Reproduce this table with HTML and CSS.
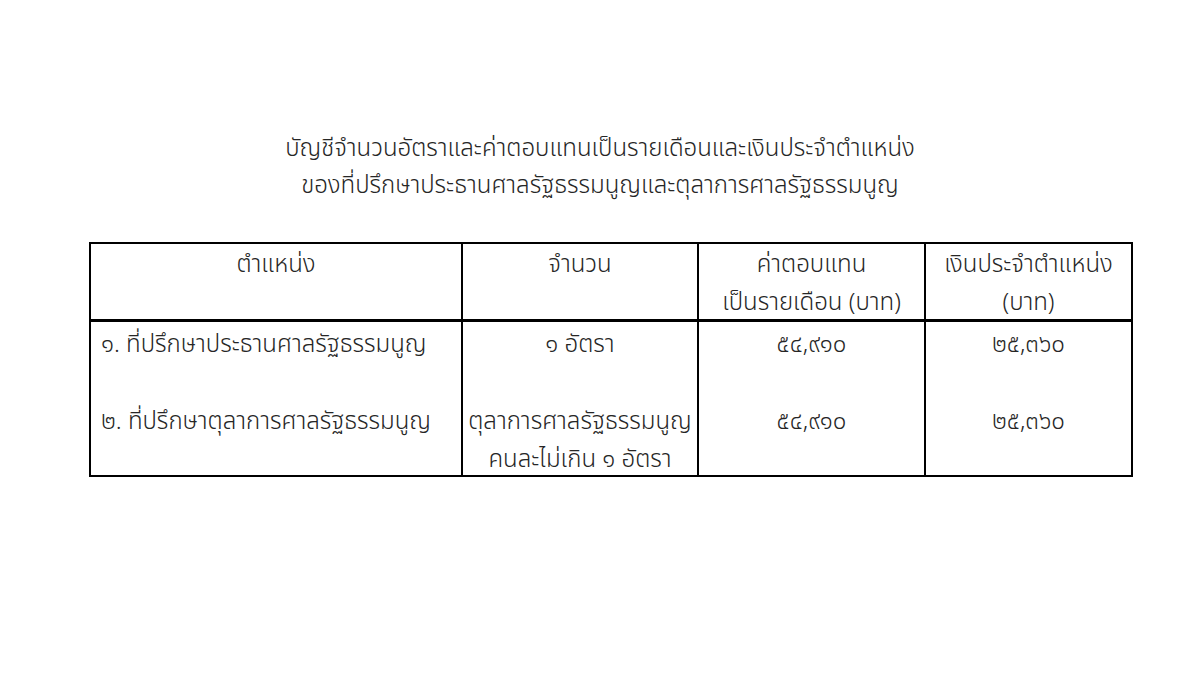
FILE: index.html
```html
<!DOCTYPE html>
<html lang="th">
<head>
<meta charset="utf-8">
<link rel="stylesheet" href="styles.css">
</head>
<body>
<div class="page">
  <div class="title">
    <div>บัญชีจำนวนอัตราและค่าตอบแทนเป็นรายเดือนและเงินประจำตำแหน่ง</div>
    <div>ของที่ปรึกษาประธานศาลรัฐธรรมนูญและตุลาการศาลรัฐธรรมนูญ</div>
  </div>
  <div class="tbl" role="table">
    <div class="cell head">ตำแหน่ง</div>
    <div class="cell head">จำนวน</div>
    <div class="cell head">ค่าตอบแทน<br>เป็นรายเดือน (บาท)</div>
    <div class="cell head last">เงินประจำตำแหน่ง<br>(บาท)</div>

    <div class="cell left">๑. ที่ปรึกษาประธานศาลรัฐธรรมนูญ</div>
    <div class="cell">๑ อัตรา</div>
    <div class="cell">๕๔,๙๑๐</div>
    <div class="cell last">๒๕,๓๖๐</div>

    <div class="cell left">๒. ที่ปรึกษาตุลาการศาลรัฐธรรมนูญ</div>
    <div class="cell">ตุลาการศาลรัฐธรรมนูญ<br>คนละไม่เกิน ๑ อัตรา</div>
    <div class="cell">๕๔,๙๑๐</div>
    <div class="cell last">๒๕,๓๖๐</div>
  </div>
</div>
</body>
</html>
```
FILE: styles.css
```css
html, body {
  margin: 0;
  padding: 0;
  background: #ffffff;
}
body {
  font-family: "Noto Sans Thai", "Noto Sans", "DejaVu Sans", sans-serif;
  font-weight: 300;
  color: #262626;
  font-size: 24px;
}
.page {
  width: 1200px;
  height: 690px;
  padding-top: 131px;
  box-sizing: border-box;
}
.title {
  text-align: center;
  line-height: 37px;
  margin-bottom: 37px;
}
.tbl {
  margin-left: 89px;
  width: 1044px;
  box-sizing: border-box;
  border: 2px solid #000;
  display: grid;
  grid-template-columns: 372px 236px 227px 205px;
  grid-template-rows: 78px 77px 76px;
}
.cell {
  box-sizing: border-box;
  border-right: 2px solid #000;
  text-align: center;
  line-height: 38px;
  padding: 4px 4px 0 4px;
  white-space: nowrap;
}
.cell.last {
  border-right: none;
}
.cell.head {
  border-bottom: 3px solid #000;
  padding-top: 2px;
}
.cell.left {
  text-align: left;
  padding-left: 10px;
}
```
